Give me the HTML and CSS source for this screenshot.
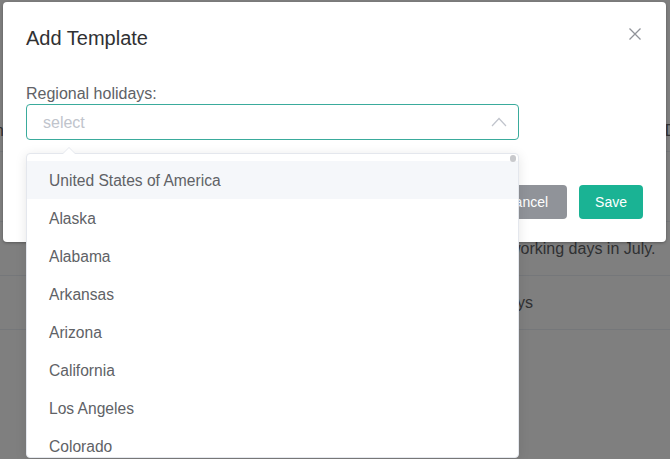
FILE: index.html
```html
<!DOCTYPE html>
<html>
<head>
<meta charset="utf-8">
<link rel="stylesheet" href="styles.css">
</head>
<body>
<div class="page">
  <div class="row row-a"><span class="cell-left">Name</span><span class="cell-right">Descri</span></div>
  <div class="row row-b"></div>
  <div class="row row-c"><span class="cell">The working days in July.</span></div>
  <div class="row row-d"><span class="cell">All days</span></div>
</div>
<div class="overlay"></div>
<div class="modal">
  <div class="modal-header">
    <div class="modal-title">Add Template</div>
    <svg class="close" width="14" height="14" viewBox="0 0 14 14"><path d="M1.5 1.5 L12.5 12.5 M12.5 1.5 L1.5 12.5" stroke="#909399" stroke-width="1.3" fill="none"/></svg>
  </div>
  <div class="modal-body">
    <div class="label">Regional holidays:</div>
    <div class="select">
      <span class="placeholder">select</span>
      <svg class="chevron" width="16" height="10" viewBox="0 0 16 10"><path d="M1 9 L8 1.5 L15 9" stroke="#c0c4cc" stroke-width="1.2" fill="none"/></svg>
    </div>
  </div>
  <div class="modal-footer">
    <button class="btn btn-cancel">Cancel</button>
    <button class="btn btn-save">Save</button>
  </div>
</div>
<div class="dropdown">
  <div class="pointer"></div>
  <div class="thumb"></div>
  <ul class="options">
    <li class="option hover">United States of America</li>
    <li class="option">Alaska</li>
    <li class="option">Alabama</li>
    <li class="option">Arkansas</li>
    <li class="option">Arizona</li>
    <li class="option">California</li>
    <li class="option">Los Angeles</li>
    <li class="option">Colorado</li>
  </ul>
</div>
</body>
</html>
```
FILE: styles.css
```css
html, body {
  margin: 0;
  padding: 0;
}
body {
  width: 670px;
  height: 459px;
  overflow: hidden;
  position: relative;
  font-family: "Liberation Sans", Arial, sans-serif;
  background: #ffffff;
}
.page {
  display: flex;
  flex-direction: column;
  padding-top: 110px;
}
.row {
  display: flex;
  align-items: center;
  border-bottom: 1px solid #ebeef5;
  font-size: 16px;
  color: #606266;
  box-sizing: border-box;
  position: relative;
}
.row-a { height: 42px; justify-content: space-between; }
.cell-left { margin-left: -30px; }
.cell-right { margin-right: -40px; }
.row-b { height: 70px; }
.row-c { height: 54px; }
.row-d { height: 54px; }
.row-c .cell, .row-d .cell { margin-left: 477px; }
.overlay {
  position: absolute;
  inset: 0;
  background: rgba(0, 0, 0, 0.5);
}
.modal {
  position: absolute;
  left: 3px;
  top: 2px;
  width: 663px;
  height: 240px;
  background: #fff;
  border-radius: 4px;
  box-shadow: 0 1px 3px rgba(0,0,0,0.3);
  box-sizing: border-box;
  display: flex;
  flex-direction: column;
}
.modal-header {
  display: flex;
  justify-content: space-between;
  align-items: flex-start;
  padding: 24px 24px 0 23px;
}
.modal-title {
  font-size: 20px;
  line-height: 24px;
  color: #303133;
}
.close {
  margin-top: 1px;
}
.modal-body {
  padding: 34px 0 0 23px;
}
.label {
  font-size: 16px;
  line-height: 20px;
  color: #606266;
}
.select {
  width: 493px;
  height: 36px;
  box-sizing: border-box;
  border: 1px solid #3aab9c;
  border-radius: 4px;
  display: flex;
  align-items: center;
  justify-content: space-between;
  padding: 0 11px 0 16px;
}
.placeholder {
  font-size: 16px;
  color: #c0c4cc;
  padding-top: 1px;
}
.chevron {
  margin-top: 0;
}
.modal-footer {
  display: flex;
  justify-content: flex-end;
  gap: 12px;
  padding: 45px 23px 0 0;
}
.btn {
  height: 34px;
  border: none;
  border-radius: 4px;
  font-family: "Liberation Sans", Arial, sans-serif;
  font-size: 14px;
  color: #fff;
  padding: 0 17px;
}
.btn-cancel { background: #909399; padding: 0 19px; }
.btn-save { background: #1ab394; padding: 0 16px; }
.dropdown {
  position: absolute;
  left: 26px;
  top: 153px;
  width: 493px;
  height: 305px;
  background: #fff;
  border: 1px solid #e4e7ed;
  border-radius: 4px;
  box-shadow: 0 2px 12px rgba(0,0,0,0.1);
  box-sizing: border-box;
}
.pointer {
  position: absolute;
  left: 35px;
  top: -7px;
  width: 0;
  height: 0;
  border-left: 7px solid transparent;
  border-right: 7px solid transparent;
  border-bottom: 7px solid #e4e7ed;
}
.pointer::after {
  content: "";
  position: absolute;
  left: -6px;
  top: 1px;
  border-left: 6px solid transparent;
  border-right: 6px solid transparent;
  border-bottom: 6px solid #fff;
}
.thumb {
  position: absolute;
  right: 2px;
  top: 1px;
  width: 6px;
  height: 7px;
  border-radius: 3px;
  background: #c8c9cc;
  z-index: 2;
}
.options {
  list-style: none;
  margin: 0;
  padding: 7px 0 0;
  height: 100%;
  box-sizing: border-box;
  overflow: hidden;
}
.option {
  height: 38px;
  line-height: 40px;
  padding-left: 22px;
  font-size: 15.6px;
  color: #606266;
}
.option.hover {
  background: #f5f7fa;
}
```
